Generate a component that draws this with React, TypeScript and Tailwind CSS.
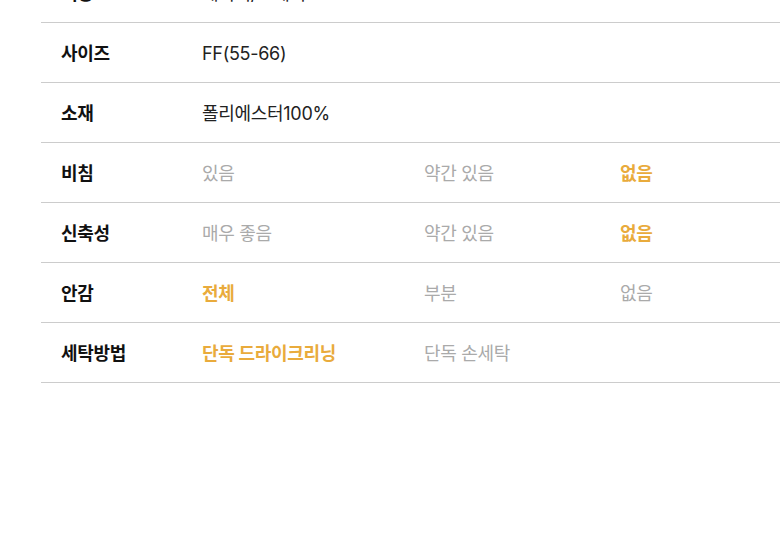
const rows: { label: string; values: { text: string; on?: boolean; plain?: boolean }[] }[] = [
  { label: "색상", values: [{ text: "네이비/그레이", plain: true }] },
  { label: "사이즈", values: [{ text: "FF(55-66)", plain: true }] },
  { label: "소재", values: [{ text: "폴리에스터100%", plain: true }] },
  { label: "비침", values: [{ text: "있음" }, { text: "약간 있음" }, { text: "없음", on: true }] },
  { label: "신축성", values: [{ text: "매우 좋음" }, { text: "약간 있음" }, { text: "없음", on: true }] },
  { label: "안감", values: [{ text: "전체", on: true }, { text: "부분" }, { text: "없음" }] },
  { label: "세탁방법", values: [{ text: "단독 드라이크리닝", on: true }, { text: "단독 손세탁" }] }
]

const colWidths = ["w-[222px]", "w-[196px]", "w-[160px]"]

export default function App() {
  return (
    <div
      className="h-[560px] w-[780px] overflow-hidden bg-white"
      style={{ fontFamily: "Inter, 'Noto Sans CJK KR', sans-serif" }}
    >
      <div className="-mt-[37px] ml-[41px]">
        {rows.map((row) => (
          <div
            key={row.label}
            className="flex h-[60px] items-center border-b border-[#cccccc] pl-5 pt-[2px] text-[18px] tracking-[-0.3px]"
          >
            <div className="w-[141px] font-bold text-[#111]">{row.label}</div>
            {row.values.map((v, i) => (
              <div
                key={i}
                className={
                  v.plain
                    ? "text-[#222]"
                    : v.on
                      ? `${colWidths[i]} font-bold text-[#e9ab3c]`
                      : `${colWidths[i]} text-[#aaaaaa]`
                }
              >
                {v.text}
              </div>
            ))}
          </div>
        ))}
      </div>
    </div>
  )
}
